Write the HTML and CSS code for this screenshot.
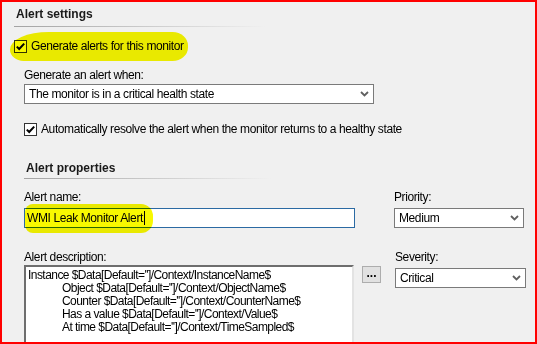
FILE: index.html
```html
<!DOCTYPE html>
<html lang="en">

<head>
    <meta charset="UTF-8">
    <title>Alert settings</title>
    <link rel="stylesheet" href="styles.css">
</head>

<body>
    <div class="frame">
        <div class="group-title">Alert settings</div>

        <div class="check-row main-check">
            <span class="checkbox">
                <svg width="11" height="11" viewBox="0 0 11 11"><path d="M1.8 5.6 L4.2 8 L9.2 2.6" /></svg>
            </span>
            <span>Generate alerts for this monitor</span>
            <span class="marker marker-gen"></span>
        </div>

        <div class="indent">
            <div class="label first-label">Generate an alert when:</div>
            <div class="combo wide">
                <span>The monitor is in a critical health state</span>
                <svg class="chevron" width="9" height="6" viewBox="0 0 9 6"><polyline points="1,1 4.5,4.5 8,1" /></svg>
            </div>

            <div class="check-row resolve">
                <span class="checkbox">
                    <svg width="11" height="11" viewBox="0 0 11 11"><path d="M1.8 5.6 L4.2 8 L9.2 2.6" /></svg>
                </span>
                <span>Automatically resolve the alert when the monitor returns to a healthy state</span>
            </div>
        </div>

        <div class="group-title props">Alert properties</div>

        <div class="field-row name-row">
            <div class="field name-field">
                <div class="label">Alert name:</div>
                <div class="edit">
                    <span>WMI Leak Monitor Alert</span><span class="caret"></span>
                    <span class="marker marker-name"></span>
                </div>
            </div>
            <div class="field priority-field">
                <div class="label">Priority:</div>
                <div class="combo">
                    <span>Medium</span>
                    <svg class="chevron" width="9" height="6" viewBox="0 0 9 6"><polyline points="1,1 4.5,4.5 8,1" /></svg>
                </div>
            </div>
        </div>

        <div class="field-row desc-row">
            <div class="field desc-field">
                <div class="label">Alert description:</div>
                <div class="memo">
                    <div>Instance $Data[Default='']/Context/InstanceName$</div>
                    <div class="tab">Object $Data[Default='']/Context/ObjectName$</div>
                    <div class="tab">Counter $Data[Default='']/Context/CounterName$</div>
                    <div class="tab">Has a value $Data[Default='']/Context/Value$</div>
                    <div class="tab">At time $Data[Default='']/Context/TimeSampled$</div>
                </div>
            </div>
            <button class="dots">...</button>
            <div class="field severity-field">
                <div class="label">Severity:</div>
                <div class="combo">
                    <span>Critical</span>
                    <svg class="chevron" width="9" height="6" viewBox="0 0 9 6"><polyline points="1,1 4.5,4.5 8,1" /></svg>
                </div>
            </div>
        </div>
    </div>
</body>

</html>
```

FILE: styles.css
```css
* {
    box-sizing: border-box;
}

body {
    margin: 0;
    font-family: "Liberation Sans", Arial, sans-serif;
    font-size: 12px;
    letter-spacing: -0.4px;
    color: #000000;
}

.frame {
    width: 537px;
    height: 344px;
    border: 2px solid #ff0000;
    background-color: #f0f0f0;
    overflow: hidden;
}

.group-title {
    font-weight: bold;
    letter-spacing: 0;
    line-height: 15px;
    height: 20px;
    width: 252px;
    margin: 5px 0 0 12px;
    padding-left: 2px;
    color: #1a1a1a;
    background: linear-gradient(to right, #a3a3a3, #f0f0f0) bottom / 100% 1px no-repeat;
}

.group-title.props {
    height: 18px;
    width: 248px;
    margin: 25px 0 0 22px;
}

.check-row {
    display: flex;
    align-items: center;
    gap: 4px;
    height: 13px;
    line-height: 13px;
    position: relative;
}

.main-check {
    margin: 13px 0 0 12px;
}

.resolve {
    margin-top: 19px;
}

.checkbox {
    width: 13px;
    height: 13px;
    border: 1px solid #333333;
    background-color: #ffffff;
    flex: none;
    display: flex;
}

.checkbox path {
    fill: none;
    stroke: #000000;
    stroke-width: 2;
}

.indent {
    margin-left: 22px;
}

.label {
    line-height: 15px;
    margin-bottom: 3px;
}

.first-label {
    margin-top: 15px;
    margin-bottom: 1px;
}

.combo {
    height: 20px;
    border: 1px solid #7a7a7a;
    background-color: #ffffff;
    display: flex;
    align-items: center;
    justify-content: space-between;
    padding: 0 4px 0 4px;
    line-height: 15px;
}

.combo.wide {
    width: 350px;
}

.chevron polyline {
    fill: none;
    stroke: #606060;
    stroke-width: 1.8;
}

.field-row {
    display: flex;
    align-items: flex-start;
    margin-left: 22px;
}

.name-row {
    margin-top: 11px;
}

.name-field {
    width: 331px;
}

.priority-field {
    width: 130px;
    margin-left: 39px;
}

.priority-field .combo {
    margin-top: 1px;
}

.edit {
    position: relative;
    height: 20px;
    border: 1px solid #2b6aa3;
    background-color: #ffffff;
    display: flex;
    align-items: center;
    padding-left: 2px;
    line-height: 15px;
}

.caret {
    width: 1px;
    height: 14px;
    margin-left: 1px;
    background-color: #000000;
}

.desc-row {
    margin-top: 22px;
}

.desc-field {
    width: 330px;
}

.desc-field .label {
    margin-bottom: 0;
}

.memo {
    height: 100px;
    background-color: #ffffff;
    border: 2px solid;
    border-color: #6e6e6e #e3e3e3 #e3e3e3 #6e6e6e;
    padding: 2px 0 0 2px;
    line-height: 13px;
    letter-spacing: -0.55px;
    white-space: nowrap;
}

.memo .tab {
    padding-left: 34px;
}

.dots {
    width: 19px;
    height: 17px;
    margin: 16px 0 0 8px;
    padding: 0 0 3px 0;
    border: 1px solid #adadad;
    background-color: #e1e1e1;
    font-family: "Liberation Sans", Arial, sans-serif;
    font-size: 12px;
    font-weight: bold;
    letter-spacing: 0;
    line-height: 12px;
    color: #000000;
}

.severity-field {
    width: 131px;
    margin-left: 14px;
}

.severity-field .combo {
    margin-top: 2px;
}

/* yellow marker strokes drawn over the screenshot */
.marker {
    position: absolute;
    z-index: 1;
    background-color: #f8f800;
    mix-blend-mode: multiply;
}

.marker-gen {
    left: -4px;
    top: -8px;
    width: 178px;
    height: 29px;
    border-radius: 40px 16px 16px 14px / 18px 14px 14px 12px;
}

.marker-name {
    left: 0;
    top: -5px;
    width: 128px;
    height: 29px;
    border-radius: 8px 12px 12px 8px;
}
```
